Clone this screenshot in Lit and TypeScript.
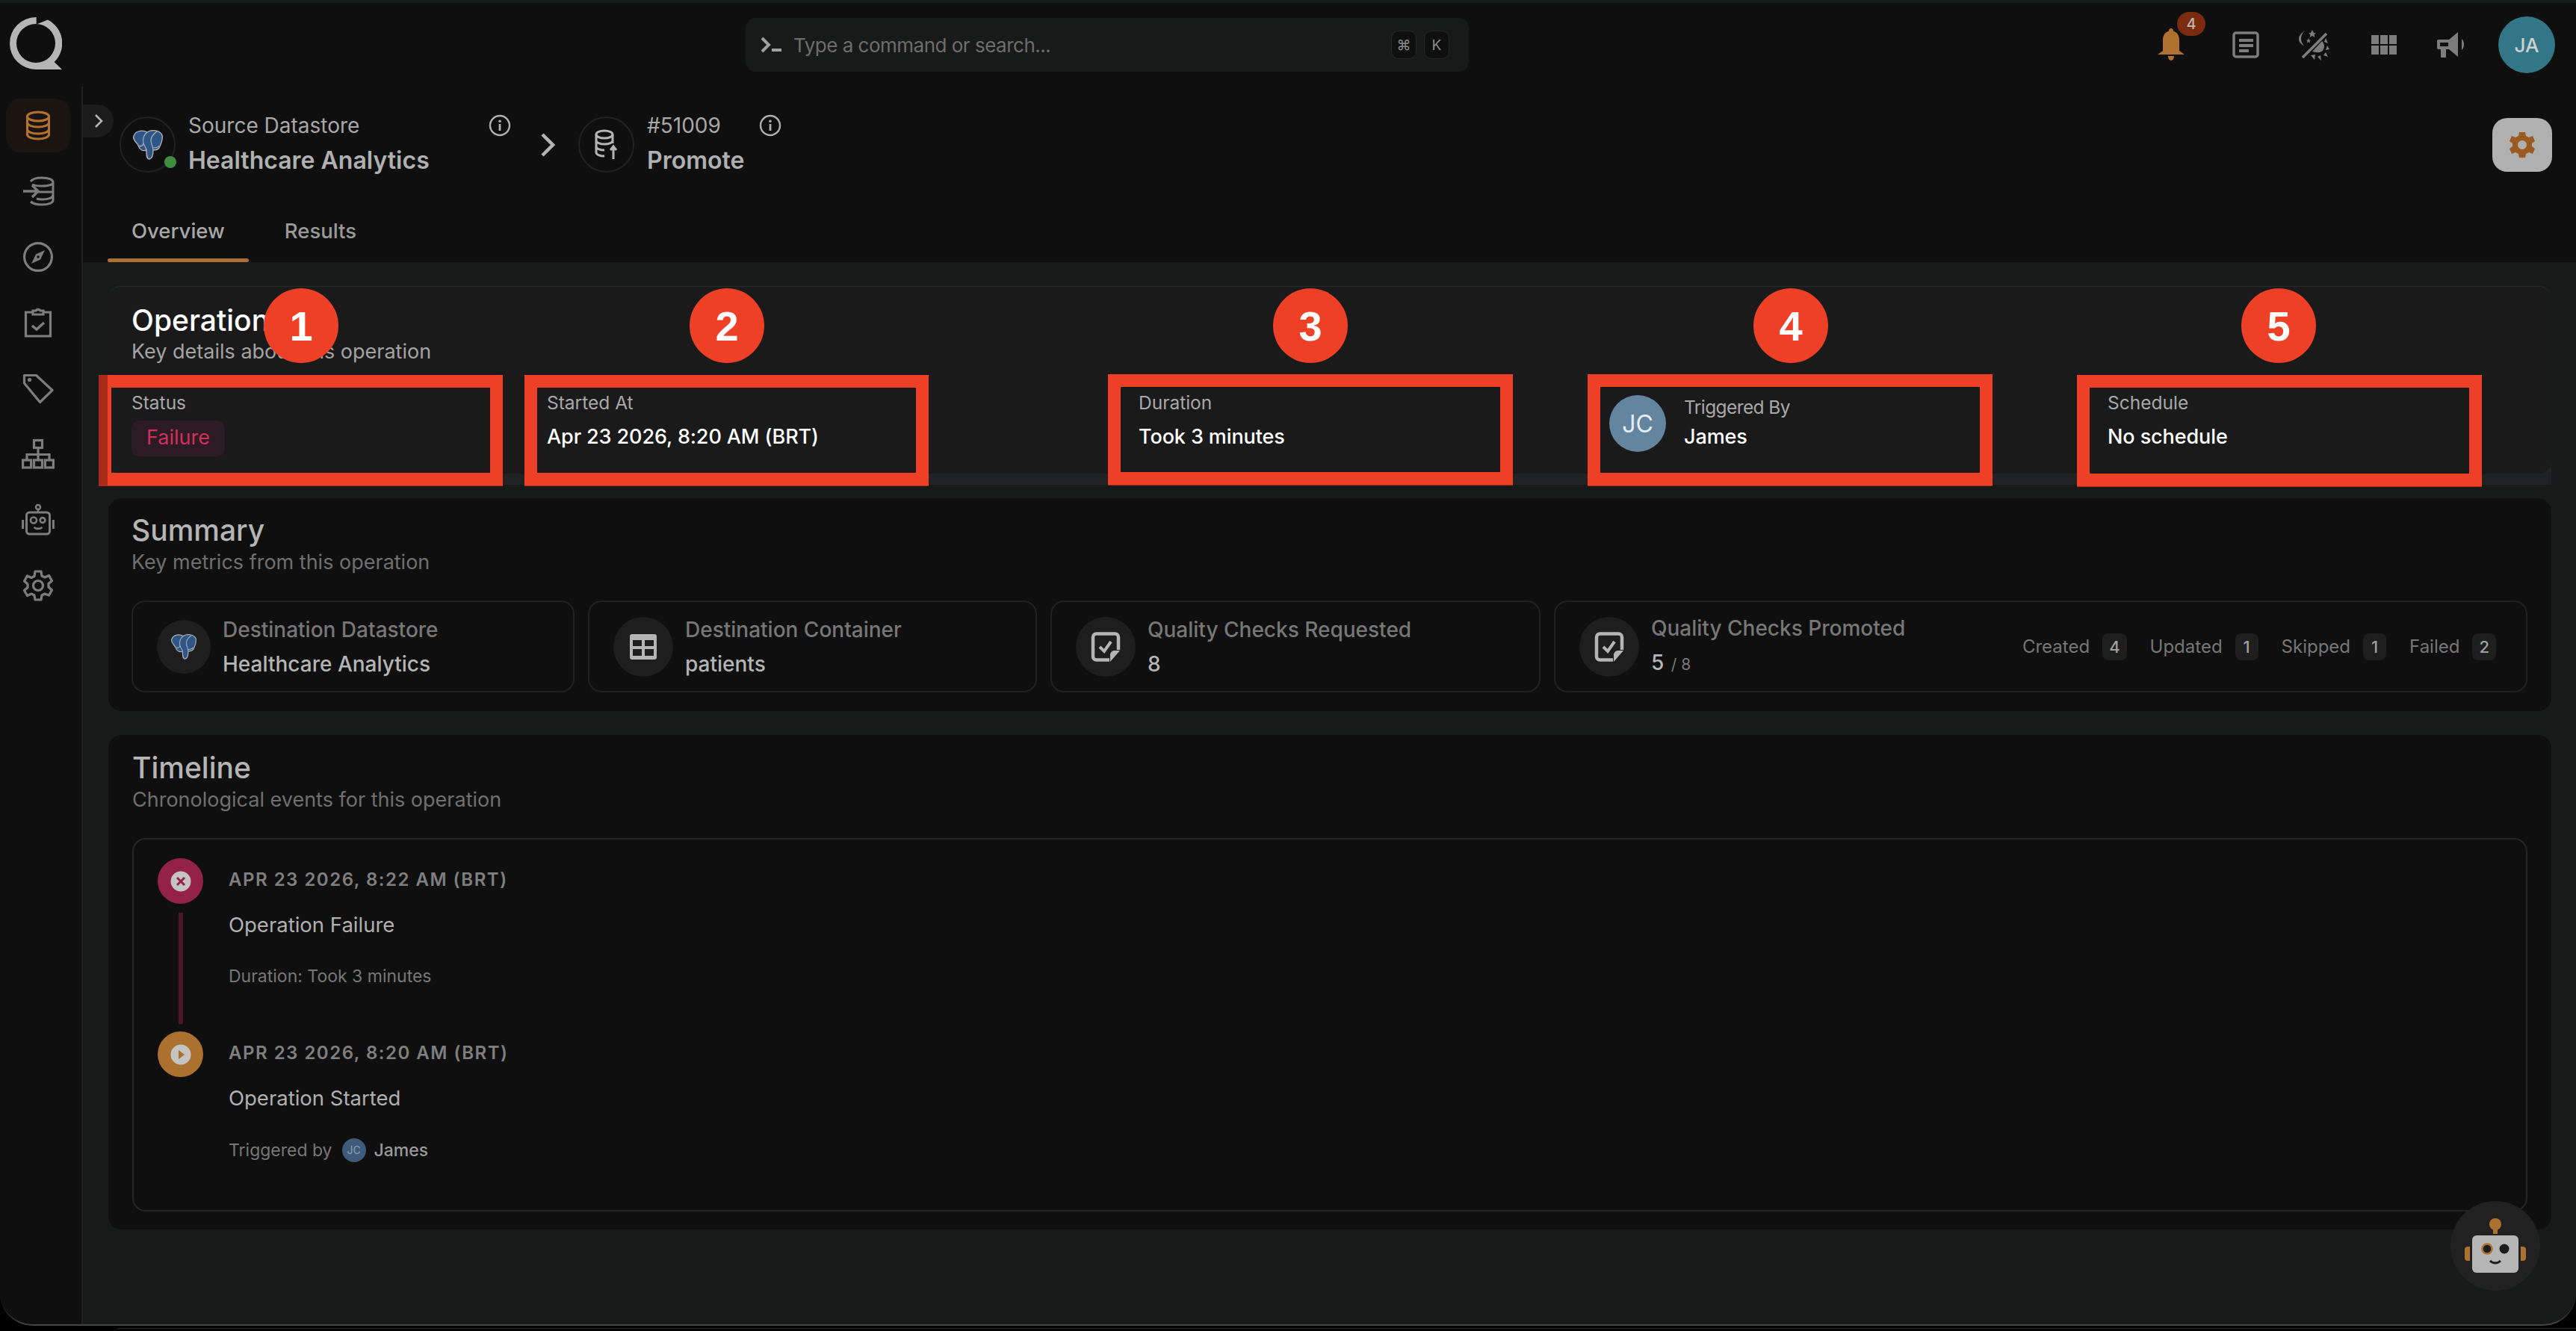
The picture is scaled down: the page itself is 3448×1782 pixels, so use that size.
import { LitElement, html, css } from "lit";
import { customElement } from "lit/decorators.js";

const elephant = (size: number) => html`<svg width=${size} height=${size} viewBox="0 0 40 40">
  <path d="M1 8C4 0 14 0 19 3C25 -1 36 0 39 7C40 12 37 20 35 24C33 27 29 27 27 27C27 31 27 38 22 39C18 39 18 33 18 27C13 29 9 26 7 21C6 17 -1 14 1 8Z" fill="#2f5688" stroke="#b0b0b0" stroke-width="1.4"/>
  <path d="M19 3C14 7 13 13 14 18C15 22 18 24 18 27M27 27C27 22 24 19 24 14C24 10 28 5 32 2M8 21c2 1 5 1 6-3M27 24c3 0 7-1 8-3" fill="none" stroke="#b0b0b0" stroke-width="1.2"/>
</svg>`;

const checkDoc = html`<svg width="40" height="40" viewBox="0 0 40 40">
  <path d="M37 24V7a4.500 4.500 0 0 0-4.500-4.500h-25A4.500 4.500 0 0 0 3 7v26a4.500 4.500 0 0 0 4.500 4.500H25" fill="none" stroke="#b5b5b5" stroke-width="4.500"/>
  <path d="M39 25L26 40V32a6 6 0 0 1 5-7z" fill="#b5b5b5"/>
  <path d="M12 20l6 6 9-13" fill="none" stroke="#b5b5b5" stroke-width="4"/>
</svg>`;

const info = html`<svg class="info" width="30" height="30" viewBox="0 0 30 30">
  <circle cx="15" cy="15" r="13" fill="none" stroke="#b0b0b0" stroke-width="2.4"/>
  <rect x="13.6" y="13" width="2.8" height="9" fill="#b0b0b0"/>
  <circle cx="15" cy="9.2" r="1.8" fill="#b0b0b0"/>
</svg>`;

const navIcons = [
  html`<svg width="44" height="44" viewBox="0 0 44 44" fill="none" stroke="#b5722f" stroke-width="3">
    <ellipse cx="22" cy="10" rx="14.5" ry="6"/>
    <path d="M7.5 10v24c0 3.5 6.500 6 14.500 6s14.500-2.500 14.500-6V10M7.500 18c0 3.500 6.500 6 14.500 6s14.500-2.500 14.500-6M7.500 27c0 3.500 6.500 6 14.500 6s14.500-2.500 14.500-6"/>
  </svg>`,
  html`<svg width="44" height="44" viewBox="0 0 44 44" fill="none" stroke="#7d7d7d" stroke-width="3">
    <path d="M12 9c2-3 8-5 15-5 9 0 15 2.500 15 6v24c0 3.500-6 6-15 6-7 0-12-1.500-15-4M14 13c3 1.500 7 2 13 2 9 0 15-2 15-5M22 23h20M20 32c2 .5 4 1 7 1 9 0 15-2.500 15-6"/>
    <path d="M2 22h20M14 14l8 8-8 8" stroke-width="3.400"/>
  </svg>`,
  html`<svg width="44" height="44" viewBox="0 0 44 44" fill="none" stroke="#7d7d7d" stroke-width="3.200">
    <circle cx="22" cy="22" r="18.400"/>
    <path d="M31 13l-12 5.500L13 31l12-5.500z" fill="#7d7d7d" stroke="none"/>
    <circle cx="22" cy="22" r="1.800" fill="#0f0f0f" stroke="none"/>
  </svg>`,
  html`<svg width="44" height="44" viewBox="0 0 44 44" fill="none" stroke="#7d7d7d" stroke-width="3.200">
    <path d="M15 8H5.500v32h33V8H29"/>
    <path d="M15 11V6h4a3.500 3.500 0 0 1 6 0h4v5z"/>
    <path d="M14 26l6 5 10-9" stroke-width="3.500"/>
  </svg>`,
  html`<svg width="44" height="44" viewBox="0 0 44 44" fill="none" stroke="#7d7d7d" stroke-width="3.200">
    <path d="M3.500 4.500h16L41 24.500 24.500 40.500 3.500 15z" stroke-linejoin="round"/>
    <circle cx="10.500" cy="10.500" r="2.600" fill="#7d7d7d" stroke="none"/>
  </svg>`,
  html`<svg width="44" height="44" viewBox="0 0 44 44" fill="none" stroke="#7d7d7d" stroke-width="3.200">
    <rect x="16.500" y="3.500" width="11" height="10"/>
    <rect x="1.600" y="30" width="11" height="10"/>
    <rect x="16.500" y="30" width="11" height="10"/>
    <rect x="31.400" y="30" width="11" height="10"/>
    <path d="M22 13.500V30M7 30v-7.500h30V30"/>
  </svg>`,
  html`<svg width="44" height="44" viewBox="0 0 44 44" fill="none" stroke="#7d7d7d" stroke-width="2.600">
    <circle cx="22" cy="5" r="3"/>
    <path d="M22 8v4"/>
    <rect x="6.500" y="12" width="31" height="29" rx="4" stroke-width="3"/>
    <circle cx="16" cy="22.500" r="4"/>
    <circle cx="28" cy="22.500" r="3.400"/>
    <path d="M16.500 32c3 2.500 8 2.500 11 0"/>
    <path d="M1.600 22v12M42.400 22v12" stroke-width="3"/>
  </svg>`,
  html`<svg width="44" height="44" viewBox="0 0 44 44" fill="none" stroke="#7d7d7d" stroke-width="3.200" stroke-linejoin="round">
    <path d="M18 3h8l1 6 4 2 5.500-2.500 4 7-4.500 4v4.500l4.500 4-4 7L31 33l-4 2-1 6h-8l-1-6-4-2-5.500 2.500-4-7L8 24.500V20l-4.500-4 4-7L13 11.500l4-2z"/>
    <circle cx="22" cy="22" r="6.500"/>
  </svg>`,
];

const fields = [
  { label: "Started At", value: "Apr 23 2026, 8:20 AM (BRT)" },
  { label: "Duration", value: "Took 3 minutes" },
];

const stats: [string, number][] = [["Created", 4], ["Updated", 1], ["Skipped", 1], ["Failed", 2]];

const boxes = [
  { n: 1, x: 132, y: 502, w: 541, h: 148, cx: 403 },
  { n: 2, x: 702, y: 502, w: 541, h: 148, cx: 973 },
  { n: 3, x: 1483, y: 501, w: 542, h: 148, cx: 1754 },
  { n: 4, x: 2125, y: 501, w: 542, h: 149, cx: 2397 },
  { n: 5, x: 2780, y: 502, w: 542, h: 149, cx: 3050 },
];

@customElement("app-root")
export class AppRoot extends LitElement {
  static styles = css`
    * { box-sizing: border-box; margin: 0; padding: 0; }
    :host {
      display: block;
      width: 3448px;
      height: 1782px;
      background: #000;
      overflow: hidden;
      font-family: Inter, "Noto Sans", sans-serif;
      color: #b5b5b5;
    }
    .frame {
      position: relative;
      height: 1775px;
      display: flex;
      flex-direction: column;
      background: #171a19;
      padding-top: 4px;
      border-bottom: 2px solid #444;
      border-radius: 0 0 44px 44px;
      overflow: hidden;
    }
    .under {
      height: 5px;
      margin: 3px 0 0 155px;
      border-top: 1px solid #2a2a2a;
      border-radius: 16px 0 0 0;
    }

    .topbar {
      height: 112px;
      flex: none;
      display: flex;
      align-items: center;
      background: #0f0f0f;
    }
    .logo { margin: -4px 0 0 13px; width: 70px; height: 70px; flex: none; }
    .search {
      margin-left: 915px;
      width: 968px;
      height: 72px;
      display: flex;
      align-items: center;
      background: #171a19;
      border-radius: 14px;
      padding: 0 26px 0 20px;
      font-size: 26px;
      color: #6d6d6d;
    }
    .search svg { margin-right: 16px; }
    .search span.ph { flex: 1; letter-spacing: -0.5px; }
    .kbd {
      width: 34px;
      height: 38px;
      margin-left: 10px;
      display: flex;
      align-items: center;
      justify-content: center;
      background: #0f0f0f;
      border: 1px solid #262828;
      border-radius: 10px;
      font-size: 19px;
      color: #8b8b8b;
    }
    .actions {
      margin-left: auto;
      display: flex;
      align-items: center;
      padding-right: 28px;
    }
    .bell { position: relative; width: 36px; height: 44px; margin-right: 64px; }
    .badge {
      position: absolute;
      left: 26px;
      top: -22px;
      width: 38px;
      height: 32px;
      border-radius: 16px;
      background: #7a2b10;
      color: #c4b4ac;
      font-size: 20px;
      font-weight: 500;
      text-align: center;
      line-height: 32px;
    }
    .act { display: block; }
    .me {
      width: 76px;
      height: 76px;
      border-radius: 50%;
      background: #327688;
      color: #cfcfcf;
      font-size: 26px;
      font-weight: 500;
      display: flex;
      align-items: center;
      justify-content: center;
    }

    .body { flex: 1; display: flex; min-height: 0; }
    .side {
      width: 111px;
      flex: none;
      background: #0f0f0f;
      border-right: 2px solid #222;
      padding: 16px 0 0 8px;
    }
    .nav {
      width: 86px;
      height: 72px;
      margin-bottom: 16px;
      display: flex;
      align-items: center;
      justify-content: center;
      border-radius: 20px;
    }
    .nav.on { background: #1a1510; }

    .main { flex: 1; min-width: 0; position: relative; }
    .collapse {
      position: absolute;
      left: 0;
      top: 24px;
      width: 41px;
      height: 44px;
      background: #1c1c1c;
      border-radius: 0 22px 22px 0;
      display: flex;
      align-items: center;
      justify-content: center;
    }
    .head {
      height: 235px;
      background: #0f0f0f;
      display: flex;
      flex-direction: column;
    }
    .crumbs {
      display: flex;
      align-items: flex-start;
      padding: 40px 32px 0 49px;
      height: 151px;
    }
    .disc {
      position: relative;
      width: 75px;
      height: 75px;
      flex: none;
      border: 2px solid #222;
      border-radius: 50%;
      display: flex;
      align-items: center;
      justify-content: center;
    }
    .dot {
      position: absolute;
      right: -3px;
      bottom: 4px;
      width: 16px;
      height: 16px;
      border-radius: 50%;
      background: #3f8d3f;
    }
    .crumb { margin-left: 17px; }
    .crumb.src { width: 432px; }
    .crumb.op { width: 180px; }
    .crumb-top {
      display: flex;
      justify-content: space-between;
      align-items: center;
      height: 30px;
      margin-top: -3px;
      font-size: 28px;
      color: #a8a8a8;
    }
    .crumb-val {
      margin-top: 12px;
      height: 40px;
      line-height: 40px;
      font-size: 32px;
      font-weight: 600;
      color: #b0b0b0;
      white-space: nowrap;
    }
    .sep { margin: 22px 31px 0 39px; flex: none; }
    .gear-btn {
      margin: 2px 0 0 auto;
      width: 80px;
      height: 72px;
      border-radius: 20px;
      background: #b0b0b0;
      display: flex;
      align-items: center;
      justify-content: center;
    }
    .tabs { display: flex; padding-left: 33px; flex: 1; gap: 16px; }
    .tab {
      padding: 24px 32px 0;
      display: flex;
      align-items: flex-start;
      position: relative;
      font-size: 27.500px;
      line-height: 36px;
      font-weight: 500;
      color: #9a9a9a;
    }
    .tab.on { color: #a8a8a8; }
    .tab.on::after {
      content: "";
      position: absolute;
      left: 0;
      right: 0;
      bottom: 0;
      height: 5px;
      border-radius: 3px;
      background: #a96f33;
    }

    .content { padding: 32px 33px 0 34px; }
    .card { border-radius: 18px; background: #0f0f0f; }
    .ttl { font-size: 39px; line-height: 40px; font-weight: 500; color: #b5b5b5; }
    .sub { font-size: 27px; line-height: 30px; color: #6f6f6f; margin-top: 8px; }

    .op-card {
      background: #202224;
      border-radius: 16px 16px 0 0;
      height: 266px;
    }
    .op-in {
      height: 251px;
      padding: 25px 0 0 31px;
      background: #1a1a1a;
      border-top: 1px solid #262828;
      border-radius: 16px;
    }
    .op-in .ttl { color: #fff; }
    .op-in .sub { color: #a3a3a3; margin-top: 7px; }
    .op-grid {
      display: grid;
      grid-template-columns: 556px 792px 630px 667px 1fr;
      margin-top: 35px;
    }
    .lbl { font-size: 24.500px; line-height: 36px; color: #a8a8a8; }
    .val { font-size: 27px; line-height: 40px; font-weight: 500; color: #fff; margin-top: 8px; white-space: nowrap; letter-spacing: -0.1px; }
    .pill {
      display: inline-block;
      margin-top: 6px;
      height: 48px;
      line-height: 46px;
      padding: 0 20px;
      border-radius: 10px;
      background: #2c1b22;
      color: #d0305f;
      font-size: 27px;
    }
    .by { display: flex; gap: 24px; align-items: flex-start; }
    .by .av {
      width: 76px;
      height: 76px;
      margin-top: 8px;
      border-radius: 50%;
      background: #64859f;
      color: #e6edf2;
      font-size: 32px;
      display: flex;
      align-items: center;
      justify-content: center;
      flex: none;
    }
    .by .lbl { margin-top: 6px; line-height: 36px; letter-spacing: -0.6px; }
    .by .val { margin-top: 2px; }

    .summary { margin-top: 18px; height: 285px; padding: 23px 32px 0 31px; }
    .tiles { display: flex; gap: 18px; margin-top: 36px; }
    .tile {
      height: 123px;
      flex: none;
      display: flex;
      align-items: center;
      gap: 16px;
      padding-left: 32px;
      border: 2px solid #212121;
      border-radius: 18px;
    }
    .tile.grow { flex: 1; min-width: 0; padding-right: 40px; }
    .bub {
      width: 80px;
      height: 80px;
      flex: none;
      border-radius: 50%;
      background: #1e1e1e;
      display: flex;
      align-items: center;
      justify-content: center;
    }
    .bub.sm { width: 72px; height: 72px; }
    .t-lbl { font-size: 28px; line-height: 36px; color: #777; white-space: nowrap; font-weight: 500; }
    .t-val { font-size: 28px; line-height: 36px; margin-top: 10px; font-weight: 500; color: #b5b5b5; white-space: nowrap; }
    .t-val small { font-size: 21px; color: #777; font-weight: 400; margin-left: 2px; }
    .stats { margin-left: auto; display: flex; align-items: center; gap: 31px; }
    .stat { display: flex; align-items: center; gap: 17px; font-size: 24px; color: #777; }
    .stat b {
      min-width: 31px;
      height: 36px;
      padding: 0 9px;
      border-radius: 8px;
      background: #1e1e1e;
      color: #a0a0a0;
      font-weight: 500;
      font-size: 22px;
      line-height: 36px;
      text-align: center;
    }

    .timeline { margin-top: 32px; height: 662px; padding: 24px 32px 0 32px; }
    .events {
      height: 500px;
      margin-top: 36px;
      padding: 25px 0 0 32px;
      border: 2px solid #262626;
      border-radius: 18px;
    }
    .ev { display: flex; gap: 34px; height: 232px; }
    .rail { width: 61px; display: flex; flex-direction: column; align-items: center; flex: none; }
    .mark {
      width: 61px;
      height: 61px;
      flex: none;
      border-radius: 50%;
      display: flex;
      align-items: center;
      justify-content: center;
    }
    .mark.fail { background: #942148; }
    .mark.start { background: #ac702f; }
    .line { width: 6px; flex: 1; margin: 12px 0 10px; background: #4a1829; }
    .when {
      margin-top: 14px;
      font-size: 24px;
      line-height: 30px;
      font-weight: 600;
      letter-spacing: 1.500px;
      color: #7f7f7f;
    }
    .what { margin-top: 27px; font-size: 27.500px; line-height: 36px; color: #b0b0b0; }
    .note {
      margin-top: 36px;
      display: flex;
      align-items: center;
      font-size: 23px;
      line-height: 30px;
      color: #777;
    }
    .mini {
      width: 32px;
      height: 32px;
      margin: 0 11px 0 13px;
      border-radius: 50%;
      background: #3f5b7c;
      color: #8fa0b3;
      font-size: 14px;
      display: flex;
      align-items: center;
      justify-content: center;
    }
    .note em { font-style: normal; font-weight: 500; color: #9a9a9a; }

    .chat {
      position: absolute;
      left: 3280px;
      top: 1608px;
      width: 120px;
      height: 120px;
      border-radius: 50%;
      background: #212121;
      display: flex;
      align-items: center;
      justify-content: center;
    }

    .box {
      position: absolute;
      border: 17px solid #ee4026;
      box-shadow: 0 1px 0 #a92a18;
    }
    .box.first::before {
      content: "";
      position: absolute;
      left: -17px;
      top: -17px;
      bottom: -17px;
      width: 12px;
      background: #a92a18;
    }
    .num {
      position: absolute;
      top: 386px;
      width: 100px;
      height: 100px;
      margin-left: -50px;
      border-radius: 50%;
      background: #ee4026;
      color: #fff;
      font-family: "Liberation Sans", sans-serif;
      font-size: 56px;
      font-weight: 700;
      display: flex;
      align-items: center;
      justify-content: center;
    }
  `;

  render() {
    return html`
      <div class="frame">
        <header class="topbar">
          <svg class="logo" viewBox="0 0 70 70">
            <path fill="#b5b5b5" fill-rule="evenodd" d="M35.700 0H35A35 35 0 1 0 35 70H70L59.700 60A35 35 0 0 0 51 3.600L37 9H35.700ZM35 9A26 26 0 1 0 35 61A26 26 0 1 0 35 9Z"/>
          </svg>
          <div class="search">
            <svg width="28" height="22" viewBox="0 0 28 22"><path d="M2 2l9 9-9 9" fill="none" stroke="#a0a0a0" stroke-width="4"/><rect x="15" y="16" width="13" height="4" fill="#a0a0a0"/></svg>
            <span class="ph">Type a command or search...</span>
            <span class="kbd">⌘</span><span class="kbd">K</span>
          </div>
          <div class="actions">
            <div class="bell">
              <svg width="36" height="44" viewBox="0 0 36 44"><path d="M18 0c2 0 3 1.500 3 3.500 5 1.500 8 6 8 12V30l7 5H0l7-5V15.500c0-6 3-10.500 8-12C15 1.500 16 0 18 0zM14 37h8c0 3-1.500 6-4 6s-4-3-4-6z" fill="#b0702f"/></svg>
              <span class="badge">4</span>
            </div>
            <svg class="act" style="margin-right:53px" width="36" height="36" viewBox="0 0 36 36"><rect x="2" y="2" width="32" height="32" rx="3" fill="none" stroke="#7d7d7d" stroke-width="3.500"/><path d="M9 10h19v4H9zM9 17h19v4H9zM9 24h13v4H9z" fill="#7d7d7d"/></svg>
            <svg class="act" style="margin-right:56px" width="41" height="41" viewBox="0 0 41 41" fill="#7d7d7d"><path d="M8 1C2 5 0 9 0 12s2 7 7 9c-3-3-4-6-4-9s1-7 5-11z"/><path d="M18 0l2 4 3 .5-2.500 2 .8 3.500L18 8l-3.300 2 .8-3.500L13 4.500l3-.5z"/><path d="M13 11l1 2.500 2 .2-1.600 1.400.6 2.400-2-1.200-2 1.200.6-2.400L10 13.700l2-.2z"/><path d="M37 5L5 37" stroke="#7d7d7d" stroke-width="3.500"/><path d="M31 15c3 3 4 7 2 11s-6 5-10 4l-5-1zM36 11l3 7-5-2zM41 26l-5 1 2-6zM16 34l6-1-1 7zM29 34l1 7-5-5zM36 30l3 6-6-2z"/></svg>
            <svg class="act" style="margin-right:54px" width="34" height="26" viewBox="0 0 34 26" fill="#7d7d7d"><path d="M0 0h10v12H0zM12 0h10v12H12zM24 0h10v12H24zM0 14h10v12H0zM12 14h10v12H12zM24 14h10v12H24z"/></svg>
            <svg class="act" style="margin-right:43px" width="39" height="34" viewBox="0 0 39 34" fill="#7d7d7d"><path d="M2 10h14L28 0v33L16 23H12v11H5V23H2a2 2 0 0 1-2-2V12a2 2 0 0 1 2-2zM4 14v5h11v-5zM33 9c4 3 4 12 0 15z" fill-rule="evenodd"/></svg>
            <div class="me">JA</div>
          </div>
        </header>
        <div class="body">
          <nav class="side">
            ${navIcons.map((icon, i) => html`<div class="nav ${i === 0 ? "on" : ""}">${icon}</div>`)}
          </nav>
          <div class="main">
            <div class="head">
              <div class="crumbs">
                <div class="disc">${elephant(40)}<span class="dot"></span></div>
                <div class="crumb src">
                  <div class="crumb-top"><span>Source Datastore</span>${info}</div>
                  <div class="crumb-val">Healthcare Analytics</div>
                </div>
                <svg class="sep" width="20" height="32" viewBox="0 0 20 32"><path d="M3 2l14 14L3 30" fill="none" stroke="#b5b5b5" stroke-width="4.500"/></svg>
                <div class="disc">
                  <svg width="34" height="42" viewBox="0 0 34 42" fill="none" stroke="#b5b5b5" stroke-width="3"><ellipse cx="14" cy="7" rx="11" ry="5"/><path d="M3 7v24c0 3 5 5 11 5M25 7v12M3 15c0 3 5 5 11 5s11-2 11-5M3 23c0 3 5 5 11 5"/><path d="M26 40V24M22 28l4-5 4 5"/></svg>
                </div>
                <div class="crumb op">
                  <div class="crumb-top"><span>#51009</span>${info}</div>
                  <div class="crumb-val">Promote</div>
                </div>
                <div class="gear-btn">
                  <svg width="34" height="34" viewBox="0 0 34 34"><path fill="#9a5a20" fill-rule="evenodd" d="M13 0h8l1 5 4 2 5-2 3 7-4 3v4l4 3-3 7-5-2-4 2-1 5h-8l-1-5-4-2-5 2-3-7 4-3v-4L0 12l3-7 5 2 4-2zM17 11a6 6 0 1 0 0 12 6 6 0 0 0 0-12z"/></svg>
                </div>
              </div>
              <div class="tabs">
                <div class="tab on">Overview</div>
                <div class="tab">Results</div>
              </div>
            </div>
            <div class="content">
              <section class="op-card">
                <div class="op-in">
                  <div class="ttl">Operation</div>
                  <div class="sub">Key details about this operation</div>
                  <div class="op-grid">
                    <div>
                      <div class="lbl">Status</div>
                      <span class="pill">Failure</span>
                    </div>
                    ${fields.map((f) => html`<div><div class="lbl">${f.label}</div><div class="val">${f.value}</div></div>`)}
                    <div class="by">
                      <div class="av">JC</div>
                      <div><div class="lbl">Triggered By</div><div class="val">James</div></div>
                    </div>
                    <div><div class="lbl">Schedule</div><div class="val">No schedule</div></div>
                  </div>
                </div>
              </section>

              <section class="card summary">
                <div class="ttl">Summary</div>
                <div class="sub">Key metrics from this operation</div>
                <div class="tiles">
                  <div class="tile" style="width:593px">
                    <div class="bub sm">${elephant(34)}</div>
                    <div><div class="t-lbl">Destination Datastore</div><div class="t-val">Healthcare Analytics</div></div>
                  </div>
                  <div class="tile" style="width:601px">
                    <div class="bub">
                      <svg width="36" height="34" viewBox="0 0 36 34"><path fill="#b5b5b5" fill-rule="evenodd" d="M3 0h30a3 3 0 0 1 3 3v28a3 3 0 0 1-3 3H3a3 3 0 0 1-3-3V3a3 3 0 0 1 3-3zM4 8v8h12V8zM20 8v8h12V8zM4 20v9h12v-9zM20 20v9h12v-9z"/></svg>
                    </div>
                    <div><div class="t-lbl">Destination Container</div><div class="t-val">patients</div></div>
                  </div>
                  <div class="tile" style="width:656px">
                    <div class="bub">${checkDoc}</div>
                    <div><div class="t-lbl">Quality Checks Requested</div><div class="t-val">8</div></div>
                  </div>
                  <div class="tile grow">
                    <div class="bub">${checkDoc}</div>
                    <div><div class="t-lbl">Quality Checks Promoted</div><div class="t-val">5 <small>/ 8</small></div></div>
                    <div class="stats">
                      ${stats.map(([k, v]) => html`<div class="stat">${k}<b>${v}</b></div>`)}
                    </div>
                  </div>
                </div>
              </section>

              <section class="card timeline">
                <div class="ttl">Timeline</div>
                <div class="sub">Chronological events for this operation</div>
                <div class="events">
                  <div class="ev">
                    <div class="rail">
                      <div class="mark fail">
                        <svg width="28" height="28" viewBox="0 0 28 28"><circle cx="14" cy="14" r="13.500" fill="#c4c4c4"/><path d="M9 9l10 10M19 9L9 19" stroke="#942148" stroke-width="3"/></svg>
                      </div>
                      <div class="line"></div>
                    </div>
                    <div>
                      <div class="when">APR 23 2026, 8:22 AM (BRT)</div>
                      <div class="what">Operation Failure</div>
                      <div class="note">Duration: Took 3 minutes</div>
                    </div>
                  </div>
                  <div class="ev">
                    <div class="rail">
                      <div class="mark start">
                        <svg width="28" height="28" viewBox="0 0 28 28"><circle cx="14" cy="14" r="13.500" fill="#c4c4c4"/><path d="M11 8l8 6-8 6z" fill="#ac702f"/></svg>
                      </div>
                    </div>
                    <div>
                      <div class="when">APR 23 2026, 8:20 AM (BRT)</div>
                      <div class="what">Operation Started</div>
                      <div class="note">Triggered by<span class="mini">JC</span><em>James</em></div>
                    </div>
                  </div>
                </div>
              </section>
            </div>
            <div class="collapse">
              <svg width="12" height="20" viewBox="0 0 12 20"><path d="M2 2l8 8-8 8" fill="none" stroke="#b5b5b5" stroke-width="2.600"/></svg>
            </div>
          </div>
        </div>

        <div class="chat">
          <svg width="84" height="74" viewBox="0 0 84 74">
            <circle cx="42" cy="8" r="8" fill="#ac702f"/>
            <rect x="39" y="12" width="6" height="9" fill="#ac702f"/>
            <rect x="11" y="23" width="62" height="50" rx="6" fill="#b5b5b5"/>
            <path d="M8 38H5a4 4 0 0 0-4 4v11a4 4 0 0 0 4 4h3zM76 38h3a4 4 0 0 1 4 4v11a4 4 0 0 1-4 4h-3z" fill="#ac702f"/>
            <circle cx="31" cy="41" r="6.500" fill="#1d1d1d" stroke="#ac702f" stroke-width="2.500"/>
            <circle cx="54" cy="41" r="6.500" fill="#1d1d1d"/>
            <path d="M35 57c4 4 10 4 14 0" fill="none" stroke="#1d1d1d" stroke-width="3"/>
          </svg>
        </div>

        ${boxes.map((b) => html`
          <div class="box ${b.n === 1 ? "first" : ""}" style="left:${b.x}px;top:${b.y}px;width:${b.w}px;height:${b.h}px"></div>
          <div class="num" style="left:${b.cx}px">${b.n}</div>
        `)}
      </div>
      <div class="under"></div>
    `;
  }
}
